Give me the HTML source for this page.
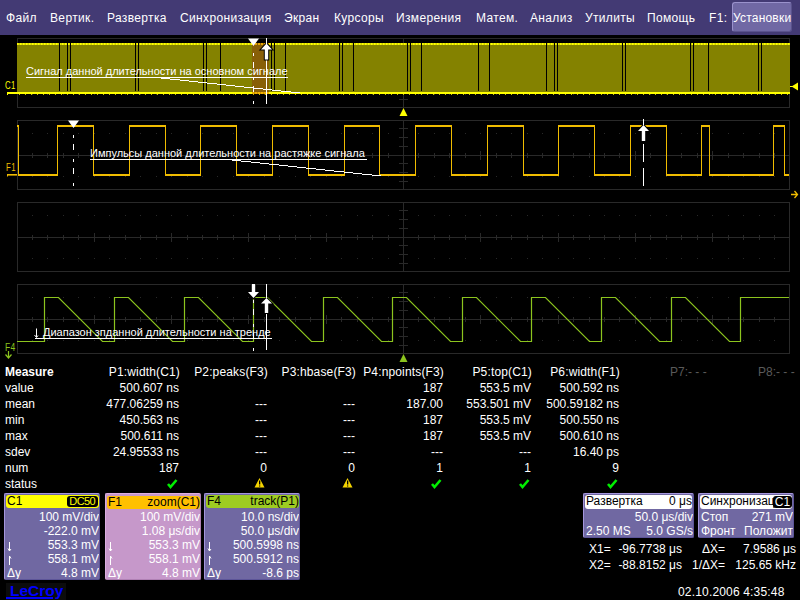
<!DOCTYPE html>
<html><head><meta charset="utf-8"><style>
*{margin:0;padding:0;box-sizing:border-box}
html,body{width:800px;height:600px;overflow:hidden;background:#000}
body{position:relative;font-family:"Liberation Sans",sans-serif;font-size:12px;line-height:14px;color:#fff}
.a{position:absolute;white-space:nowrap}
.r{text-align:right}
#menu{position:absolute;left:0;top:0;width:800px;height:35px;background:#433a74}
#menu .a{color:#fff;top:11px;letter-spacing:0.35px}
svg{position:absolute;left:0;top:0}
.ann{font-size:11px;line-height:12px;color:#fff}
.box{position:absolute;top:493px;width:96px;height:87px;border:1px solid;border-radius:2px;color:#fff;overflow:hidden}
.box .hd{position:absolute;left:1px;top:1px;right:0;height:13px;border-radius:3px;color:#000}
.l{position:absolute;left:1px;top:-1px}
.rt{position:absolute;right:0;top:-1px}
.rw{position:absolute;left:2px;right:1px;white-space:nowrap}
.box .rw.r,.box2 .rw.r{left:auto;right:0;text-align:right}
.badge{position:absolute;right:1px;top:1px;width:31px;height:11px;background:#000;border-radius:3px;color:#ff0;font-size:11px;line-height:11px;text-align:center;letter-spacing:-0.6px;text-indent:-0.6px}
.box2{position:absolute;top:493px;height:45px;border:1px solid;border-color:#a496dc #5c5498 #5c5498 #a496dc;border-radius:2px;background:#7068a2;color:#fff;overflow:hidden}
.hd2{position:absolute;left:1px;top:1px;right:1px;height:14px;border-radius:3px;background:#fff;color:#000;overflow:hidden}
.badge2{position:absolute;right:0;top:1px;width:19px;height:12px;background:#000;border-radius:3px;color:#fff;text-align:center;line-height:12px}
</style></head><body>
<div id="menu">
<div class="a" style="left:6px">Файл</div>
<div class="a" style="left:50px">Вертик.</div>
<div class="a" style="left:107px">Развертка</div>
<div class="a" style="left:180px">Синхронизация</div>
<div class="a" style="left:284px">Экран</div>
<div class="a" style="left:334px">Курсоры</div>
<div class="a" style="left:396px">Измерения</div>
<div class="a" style="left:476px">Матем.</div>
<div class="a" style="left:530px">Анализ</div>
<div class="a" style="left:585px">Утилиты</div>
<div class="a" style="left:647px">Помощь</div>
<div class="a" style="left:709px">F1:</div>
<div class="a" style="left:732px;top:2px;width:60px;height:30px;background:#7068a4;border:1px solid;border-color:#9a92cc #5a528c #5a528c #9a92cc;border-radius:3px"></div>
<div class="a" style="left:733px;letter-spacing:0.2px">Установки</div>
</div>
<svg width="800" height="600" viewBox="0 0 800 600">
<rect x="17.5" y="38.5" width="772" height="69" fill="none" stroke="#292929" stroke-width="1"/>
<line x1="17" y1="73.5" x2="789" y2="73.5" stroke="#292929" stroke-width="1" />
<line x1="403.5" y1="38" x2="403.5" y2="107" stroke="#292929" stroke-width="1" />
<line x1="32.5" y1="71" x2="32.5" y2="76" stroke="#292929" stroke-width="1" />
<rect x="32" y="51" width="1" height="1" fill="#292929" />
<rect x="32" y="94" width="1" height="1" fill="#292929" />
<line x1="47.5" y1="71" x2="47.5" y2="76" stroke="#292929" stroke-width="1" />
<rect x="47" y="51" width="1" height="1" fill="#292929" />
<rect x="47" y="94" width="1" height="1" fill="#292929" />
<line x1="63.5" y1="71" x2="63.5" y2="76" stroke="#292929" stroke-width="1" />
<rect x="63" y="51" width="1" height="1" fill="#292929" />
<rect x="63" y="94" width="1" height="1" fill="#292929" />
<line x1="78.5" y1="71" x2="78.5" y2="76" stroke="#292929" stroke-width="1" />
<rect x="78" y="51" width="1" height="1" fill="#292929" />
<rect x="78" y="94" width="1" height="1" fill="#292929" />
<line x1="94.5" y1="69" x2="94.5" y2="78" stroke="#292929" stroke-width="1" />
<rect x="94" y="51" width="1" height="1" fill="#292929" />
<rect x="94" y="94" width="1" height="1" fill="#292929" />
<line x1="109.5" y1="71" x2="109.5" y2="76" stroke="#292929" stroke-width="1" />
<rect x="109" y="51" width="1" height="1" fill="#292929" />
<rect x="109" y="94" width="1" height="1" fill="#292929" />
<line x1="125.5" y1="71" x2="125.5" y2="76" stroke="#292929" stroke-width="1" />
<rect x="125" y="51" width="1" height="1" fill="#292929" />
<rect x="125" y="94" width="1" height="1" fill="#292929" />
<line x1="140.5" y1="71" x2="140.5" y2="76" stroke="#292929" stroke-width="1" />
<rect x="140" y="51" width="1" height="1" fill="#292929" />
<rect x="140" y="94" width="1" height="1" fill="#292929" />
<line x1="156.5" y1="71" x2="156.5" y2="76" stroke="#292929" stroke-width="1" />
<rect x="156" y="51" width="1" height="1" fill="#292929" />
<rect x="156" y="94" width="1" height="1" fill="#292929" />
<line x1="171.5" y1="69" x2="171.5" y2="78" stroke="#292929" stroke-width="1" />
<rect x="171" y="51" width="1" height="1" fill="#292929" />
<rect x="171" y="94" width="1" height="1" fill="#292929" />
<line x1="187.5" y1="71" x2="187.5" y2="76" stroke="#292929" stroke-width="1" />
<rect x="187" y="51" width="1" height="1" fill="#292929" />
<rect x="187" y="94" width="1" height="1" fill="#292929" />
<line x1="202.5" y1="71" x2="202.5" y2="76" stroke="#292929" stroke-width="1" />
<rect x="202" y="51" width="1" height="1" fill="#292929" />
<rect x="202" y="94" width="1" height="1" fill="#292929" />
<line x1="217.5" y1="71" x2="217.5" y2="76" stroke="#292929" stroke-width="1" />
<rect x="217" y="51" width="1" height="1" fill="#292929" />
<rect x="217" y="94" width="1" height="1" fill="#292929" />
<line x1="233.5" y1="71" x2="233.5" y2="76" stroke="#292929" stroke-width="1" />
<rect x="233" y="51" width="1" height="1" fill="#292929" />
<rect x="233" y="94" width="1" height="1" fill="#292929" />
<line x1="248.5" y1="69" x2="248.5" y2="78" stroke="#292929" stroke-width="1" />
<rect x="248" y="51" width="1" height="1" fill="#292929" />
<rect x="248" y="94" width="1" height="1" fill="#292929" />
<line x1="264.5" y1="71" x2="264.5" y2="76" stroke="#292929" stroke-width="1" />
<rect x="264" y="51" width="1" height="1" fill="#292929" />
<rect x="264" y="94" width="1" height="1" fill="#292929" />
<line x1="279.5" y1="71" x2="279.5" y2="76" stroke="#292929" stroke-width="1" />
<rect x="279" y="51" width="1" height="1" fill="#292929" />
<rect x="279" y="94" width="1" height="1" fill="#292929" />
<line x1="295.5" y1="71" x2="295.5" y2="76" stroke="#292929" stroke-width="1" />
<rect x="295" y="51" width="1" height="1" fill="#292929" />
<rect x="295" y="94" width="1" height="1" fill="#292929" />
<line x1="310.5" y1="71" x2="310.5" y2="76" stroke="#292929" stroke-width="1" />
<rect x="310" y="51" width="1" height="1" fill="#292929" />
<rect x="310" y="94" width="1" height="1" fill="#292929" />
<line x1="326.5" y1="69" x2="326.5" y2="78" stroke="#292929" stroke-width="1" />
<rect x="326" y="51" width="1" height="1" fill="#292929" />
<rect x="326" y="94" width="1" height="1" fill="#292929" />
<line x1="341.5" y1="71" x2="341.5" y2="76" stroke="#292929" stroke-width="1" />
<rect x="341" y="51" width="1" height="1" fill="#292929" />
<rect x="341" y="94" width="1" height="1" fill="#292929" />
<line x1="357.5" y1="71" x2="357.5" y2="76" stroke="#292929" stroke-width="1" />
<rect x="357" y="51" width="1" height="1" fill="#292929" />
<rect x="357" y="94" width="1" height="1" fill="#292929" />
<line x1="372.5" y1="71" x2="372.5" y2="76" stroke="#292929" stroke-width="1" />
<rect x="372" y="51" width="1" height="1" fill="#292929" />
<rect x="372" y="94" width="1" height="1" fill="#292929" />
<line x1="388.5" y1="71" x2="388.5" y2="76" stroke="#292929" stroke-width="1" />
<rect x="388" y="51" width="1" height="1" fill="#292929" />
<rect x="388" y="94" width="1" height="1" fill="#292929" />
<line x1="403.5" y1="69" x2="403.5" y2="78" stroke="#292929" stroke-width="1" />
<rect x="403" y="51" width="1" height="1" fill="#292929" />
<rect x="403" y="94" width="1" height="1" fill="#292929" />
<line x1="418.5" y1="71" x2="418.5" y2="76" stroke="#292929" stroke-width="1" />
<rect x="418" y="51" width="1" height="1" fill="#292929" />
<rect x="418" y="94" width="1" height="1" fill="#292929" />
<line x1="434.5" y1="71" x2="434.5" y2="76" stroke="#292929" stroke-width="1" />
<rect x="434" y="51" width="1" height="1" fill="#292929" />
<rect x="434" y="94" width="1" height="1" fill="#292929" />
<line x1="449.5" y1="71" x2="449.5" y2="76" stroke="#292929" stroke-width="1" />
<rect x="449" y="51" width="1" height="1" fill="#292929" />
<rect x="449" y="94" width="1" height="1" fill="#292929" />
<line x1="465.5" y1="71" x2="465.5" y2="76" stroke="#292929" stroke-width="1" />
<rect x="465" y="51" width="1" height="1" fill="#292929" />
<rect x="465" y="94" width="1" height="1" fill="#292929" />
<line x1="480.5" y1="69" x2="480.5" y2="78" stroke="#292929" stroke-width="1" />
<rect x="480" y="51" width="1" height="1" fill="#292929" />
<rect x="480" y="94" width="1" height="1" fill="#292929" />
<line x1="496.5" y1="71" x2="496.5" y2="76" stroke="#292929" stroke-width="1" />
<rect x="496" y="51" width="1" height="1" fill="#292929" />
<rect x="496" y="94" width="1" height="1" fill="#292929" />
<line x1="511.5" y1="71" x2="511.5" y2="76" stroke="#292929" stroke-width="1" />
<rect x="511" y="51" width="1" height="1" fill="#292929" />
<rect x="511" y="94" width="1" height="1" fill="#292929" />
<line x1="527.5" y1="71" x2="527.5" y2="76" stroke="#292929" stroke-width="1" />
<rect x="527" y="51" width="1" height="1" fill="#292929" />
<rect x="527" y="94" width="1" height="1" fill="#292929" />
<line x1="542.5" y1="71" x2="542.5" y2="76" stroke="#292929" stroke-width="1" />
<rect x="542" y="51" width="1" height="1" fill="#292929" />
<rect x="542" y="94" width="1" height="1" fill="#292929" />
<line x1="558.5" y1="69" x2="558.5" y2="78" stroke="#292929" stroke-width="1" />
<rect x="558" y="51" width="1" height="1" fill="#292929" />
<rect x="558" y="94" width="1" height="1" fill="#292929" />
<line x1="573.5" y1="71" x2="573.5" y2="76" stroke="#292929" stroke-width="1" />
<rect x="573" y="51" width="1" height="1" fill="#292929" />
<rect x="573" y="94" width="1" height="1" fill="#292929" />
<line x1="589.5" y1="71" x2="589.5" y2="76" stroke="#292929" stroke-width="1" />
<rect x="589" y="51" width="1" height="1" fill="#292929" />
<rect x="589" y="94" width="1" height="1" fill="#292929" />
<line x1="604.5" y1="71" x2="604.5" y2="76" stroke="#292929" stroke-width="1" />
<rect x="604" y="51" width="1" height="1" fill="#292929" />
<rect x="604" y="94" width="1" height="1" fill="#292929" />
<line x1="619.5" y1="71" x2="619.5" y2="76" stroke="#292929" stroke-width="1" />
<rect x="619" y="51" width="1" height="1" fill="#292929" />
<rect x="619" y="94" width="1" height="1" fill="#292929" />
<line x1="635.5" y1="69" x2="635.5" y2="78" stroke="#292929" stroke-width="1" />
<rect x="635" y="51" width="1" height="1" fill="#292929" />
<rect x="635" y="94" width="1" height="1" fill="#292929" />
<line x1="650.5" y1="71" x2="650.5" y2="76" stroke="#292929" stroke-width="1" />
<rect x="650" y="51" width="1" height="1" fill="#292929" />
<rect x="650" y="94" width="1" height="1" fill="#292929" />
<line x1="666.5" y1="71" x2="666.5" y2="76" stroke="#292929" stroke-width="1" />
<rect x="666" y="51" width="1" height="1" fill="#292929" />
<rect x="666" y="94" width="1" height="1" fill="#292929" />
<line x1="681.5" y1="71" x2="681.5" y2="76" stroke="#292929" stroke-width="1" />
<rect x="681" y="51" width="1" height="1" fill="#292929" />
<rect x="681" y="94" width="1" height="1" fill="#292929" />
<line x1="697.5" y1="71" x2="697.5" y2="76" stroke="#292929" stroke-width="1" />
<rect x="697" y="51" width="1" height="1" fill="#292929" />
<rect x="697" y="94" width="1" height="1" fill="#292929" />
<line x1="712.5" y1="69" x2="712.5" y2="78" stroke="#292929" stroke-width="1" />
<rect x="712" y="51" width="1" height="1" fill="#292929" />
<rect x="712" y="94" width="1" height="1" fill="#292929" />
<line x1="728.5" y1="71" x2="728.5" y2="76" stroke="#292929" stroke-width="1" />
<rect x="728" y="51" width="1" height="1" fill="#292929" />
<rect x="728" y="94" width="1" height="1" fill="#292929" />
<line x1="743.5" y1="71" x2="743.5" y2="76" stroke="#292929" stroke-width="1" />
<rect x="743" y="51" width="1" height="1" fill="#292929" />
<rect x="743" y="94" width="1" height="1" fill="#292929" />
<line x1="759.5" y1="71" x2="759.5" y2="76" stroke="#292929" stroke-width="1" />
<rect x="759" y="51" width="1" height="1" fill="#292929" />
<rect x="759" y="94" width="1" height="1" fill="#292929" />
<line x1="774.5" y1="71" x2="774.5" y2="76" stroke="#292929" stroke-width="1" />
<rect x="774" y="51" width="1" height="1" fill="#292929" />
<rect x="774" y="94" width="1" height="1" fill="#292929" />
<line x1="399" y1="46.5" x2="408" y2="46.5" stroke="#292929" stroke-width="1" />
<line x1="399" y1="55.5" x2="408" y2="55.5" stroke="#292929" stroke-width="1" />
<line x1="399" y1="64.5" x2="408" y2="64.5" stroke="#292929" stroke-width="1" />
<line x1="399" y1="81.5" x2="408" y2="81.5" stroke="#292929" stroke-width="1" />
<line x1="399" y1="90.5" x2="408" y2="90.5" stroke="#292929" stroke-width="1" />
<line x1="399" y1="99.5" x2="408" y2="99.5" stroke="#292929" stroke-width="1" />
<rect x="17.5" y="120.5" width="772" height="69" fill="none" stroke="#292929" stroke-width="1"/>
<line x1="17" y1="155.5" x2="789" y2="155.5" stroke="#292929" stroke-width="1" />
<line x1="403.5" y1="120" x2="403.5" y2="189" stroke="#292929" stroke-width="1" />
<line x1="32.5" y1="153" x2="32.5" y2="158" stroke="#292929" stroke-width="1" />
<rect x="32" y="133" width="1" height="1" fill="#292929" />
<rect x="32" y="176" width="1" height="1" fill="#292929" />
<line x1="47.5" y1="153" x2="47.5" y2="158" stroke="#292929" stroke-width="1" />
<rect x="47" y="133" width="1" height="1" fill="#292929" />
<rect x="47" y="176" width="1" height="1" fill="#292929" />
<line x1="63.5" y1="153" x2="63.5" y2="158" stroke="#292929" stroke-width="1" />
<rect x="63" y="133" width="1" height="1" fill="#292929" />
<rect x="63" y="176" width="1" height="1" fill="#292929" />
<line x1="78.5" y1="153" x2="78.5" y2="158" stroke="#292929" stroke-width="1" />
<rect x="78" y="133" width="1" height="1" fill="#292929" />
<rect x="78" y="176" width="1" height="1" fill="#292929" />
<line x1="94.5" y1="151" x2="94.5" y2="160" stroke="#292929" stroke-width="1" />
<rect x="94" y="133" width="1" height="1" fill="#292929" />
<rect x="94" y="176" width="1" height="1" fill="#292929" />
<line x1="109.5" y1="153" x2="109.5" y2="158" stroke="#292929" stroke-width="1" />
<rect x="109" y="133" width="1" height="1" fill="#292929" />
<rect x="109" y="176" width="1" height="1" fill="#292929" />
<line x1="125.5" y1="153" x2="125.5" y2="158" stroke="#292929" stroke-width="1" />
<rect x="125" y="133" width="1" height="1" fill="#292929" />
<rect x="125" y="176" width="1" height="1" fill="#292929" />
<line x1="140.5" y1="153" x2="140.5" y2="158" stroke="#292929" stroke-width="1" />
<rect x="140" y="133" width="1" height="1" fill="#292929" />
<rect x="140" y="176" width="1" height="1" fill="#292929" />
<line x1="156.5" y1="153" x2="156.5" y2="158" stroke="#292929" stroke-width="1" />
<rect x="156" y="133" width="1" height="1" fill="#292929" />
<rect x="156" y="176" width="1" height="1" fill="#292929" />
<line x1="171.5" y1="151" x2="171.5" y2="160" stroke="#292929" stroke-width="1" />
<rect x="171" y="133" width="1" height="1" fill="#292929" />
<rect x="171" y="176" width="1" height="1" fill="#292929" />
<line x1="187.5" y1="153" x2="187.5" y2="158" stroke="#292929" stroke-width="1" />
<rect x="187" y="133" width="1" height="1" fill="#292929" />
<rect x="187" y="176" width="1" height="1" fill="#292929" />
<line x1="202.5" y1="153" x2="202.5" y2="158" stroke="#292929" stroke-width="1" />
<rect x="202" y="133" width="1" height="1" fill="#292929" />
<rect x="202" y="176" width="1" height="1" fill="#292929" />
<line x1="217.5" y1="153" x2="217.5" y2="158" stroke="#292929" stroke-width="1" />
<rect x="217" y="133" width="1" height="1" fill="#292929" />
<rect x="217" y="176" width="1" height="1" fill="#292929" />
<line x1="233.5" y1="153" x2="233.5" y2="158" stroke="#292929" stroke-width="1" />
<rect x="233" y="133" width="1" height="1" fill="#292929" />
<rect x="233" y="176" width="1" height="1" fill="#292929" />
<line x1="248.5" y1="151" x2="248.5" y2="160" stroke="#292929" stroke-width="1" />
<rect x="248" y="133" width="1" height="1" fill="#292929" />
<rect x="248" y="176" width="1" height="1" fill="#292929" />
<line x1="264.5" y1="153" x2="264.5" y2="158" stroke="#292929" stroke-width="1" />
<rect x="264" y="133" width="1" height="1" fill="#292929" />
<rect x="264" y="176" width="1" height="1" fill="#292929" />
<line x1="279.5" y1="153" x2="279.5" y2="158" stroke="#292929" stroke-width="1" />
<rect x="279" y="133" width="1" height="1" fill="#292929" />
<rect x="279" y="176" width="1" height="1" fill="#292929" />
<line x1="295.5" y1="153" x2="295.5" y2="158" stroke="#292929" stroke-width="1" />
<rect x="295" y="133" width="1" height="1" fill="#292929" />
<rect x="295" y="176" width="1" height="1" fill="#292929" />
<line x1="310.5" y1="153" x2="310.5" y2="158" stroke="#292929" stroke-width="1" />
<rect x="310" y="133" width="1" height="1" fill="#292929" />
<rect x="310" y="176" width="1" height="1" fill="#292929" />
<line x1="326.5" y1="151" x2="326.5" y2="160" stroke="#292929" stroke-width="1" />
<rect x="326" y="133" width="1" height="1" fill="#292929" />
<rect x="326" y="176" width="1" height="1" fill="#292929" />
<line x1="341.5" y1="153" x2="341.5" y2="158" stroke="#292929" stroke-width="1" />
<rect x="341" y="133" width="1" height="1" fill="#292929" />
<rect x="341" y="176" width="1" height="1" fill="#292929" />
<line x1="357.5" y1="153" x2="357.5" y2="158" stroke="#292929" stroke-width="1" />
<rect x="357" y="133" width="1" height="1" fill="#292929" />
<rect x="357" y="176" width="1" height="1" fill="#292929" />
<line x1="372.5" y1="153" x2="372.5" y2="158" stroke="#292929" stroke-width="1" />
<rect x="372" y="133" width="1" height="1" fill="#292929" />
<rect x="372" y="176" width="1" height="1" fill="#292929" />
<line x1="388.5" y1="153" x2="388.5" y2="158" stroke="#292929" stroke-width="1" />
<rect x="388" y="133" width="1" height="1" fill="#292929" />
<rect x="388" y="176" width="1" height="1" fill="#292929" />
<line x1="403.5" y1="151" x2="403.5" y2="160" stroke="#292929" stroke-width="1" />
<rect x="403" y="133" width="1" height="1" fill="#292929" />
<rect x="403" y="176" width="1" height="1" fill="#292929" />
<line x1="418.5" y1="153" x2="418.5" y2="158" stroke="#292929" stroke-width="1" />
<rect x="418" y="133" width="1" height="1" fill="#292929" />
<rect x="418" y="176" width="1" height="1" fill="#292929" />
<line x1="434.5" y1="153" x2="434.5" y2="158" stroke="#292929" stroke-width="1" />
<rect x="434" y="133" width="1" height="1" fill="#292929" />
<rect x="434" y="176" width="1" height="1" fill="#292929" />
<line x1="449.5" y1="153" x2="449.5" y2="158" stroke="#292929" stroke-width="1" />
<rect x="449" y="133" width="1" height="1" fill="#292929" />
<rect x="449" y="176" width="1" height="1" fill="#292929" />
<line x1="465.5" y1="153" x2="465.5" y2="158" stroke="#292929" stroke-width="1" />
<rect x="465" y="133" width="1" height="1" fill="#292929" />
<rect x="465" y="176" width="1" height="1" fill="#292929" />
<line x1="480.5" y1="151" x2="480.5" y2="160" stroke="#292929" stroke-width="1" />
<rect x="480" y="133" width="1" height="1" fill="#292929" />
<rect x="480" y="176" width="1" height="1" fill="#292929" />
<line x1="496.5" y1="153" x2="496.5" y2="158" stroke="#292929" stroke-width="1" />
<rect x="496" y="133" width="1" height="1" fill="#292929" />
<rect x="496" y="176" width="1" height="1" fill="#292929" />
<line x1="511.5" y1="153" x2="511.5" y2="158" stroke="#292929" stroke-width="1" />
<rect x="511" y="133" width="1" height="1" fill="#292929" />
<rect x="511" y="176" width="1" height="1" fill="#292929" />
<line x1="527.5" y1="153" x2="527.5" y2="158" stroke="#292929" stroke-width="1" />
<rect x="527" y="133" width="1" height="1" fill="#292929" />
<rect x="527" y="176" width="1" height="1" fill="#292929" />
<line x1="542.5" y1="153" x2="542.5" y2="158" stroke="#292929" stroke-width="1" />
<rect x="542" y="133" width="1" height="1" fill="#292929" />
<rect x="542" y="176" width="1" height="1" fill="#292929" />
<line x1="558.5" y1="151" x2="558.5" y2="160" stroke="#292929" stroke-width="1" />
<rect x="558" y="133" width="1" height="1" fill="#292929" />
<rect x="558" y="176" width="1" height="1" fill="#292929" />
<line x1="573.5" y1="153" x2="573.5" y2="158" stroke="#292929" stroke-width="1" />
<rect x="573" y="133" width="1" height="1" fill="#292929" />
<rect x="573" y="176" width="1" height="1" fill="#292929" />
<line x1="589.5" y1="153" x2="589.5" y2="158" stroke="#292929" stroke-width="1" />
<rect x="589" y="133" width="1" height="1" fill="#292929" />
<rect x="589" y="176" width="1" height="1" fill="#292929" />
<line x1="604.5" y1="153" x2="604.5" y2="158" stroke="#292929" stroke-width="1" />
<rect x="604" y="133" width="1" height="1" fill="#292929" />
<rect x="604" y="176" width="1" height="1" fill="#292929" />
<line x1="619.5" y1="153" x2="619.5" y2="158" stroke="#292929" stroke-width="1" />
<rect x="619" y="133" width="1" height="1" fill="#292929" />
<rect x="619" y="176" width="1" height="1" fill="#292929" />
<line x1="635.5" y1="151" x2="635.5" y2="160" stroke="#292929" stroke-width="1" />
<rect x="635" y="133" width="1" height="1" fill="#292929" />
<rect x="635" y="176" width="1" height="1" fill="#292929" />
<line x1="650.5" y1="153" x2="650.5" y2="158" stroke="#292929" stroke-width="1" />
<rect x="650" y="133" width="1" height="1" fill="#292929" />
<rect x="650" y="176" width="1" height="1" fill="#292929" />
<line x1="666.5" y1="153" x2="666.5" y2="158" stroke="#292929" stroke-width="1" />
<rect x="666" y="133" width="1" height="1" fill="#292929" />
<rect x="666" y="176" width="1" height="1" fill="#292929" />
<line x1="681.5" y1="153" x2="681.5" y2="158" stroke="#292929" stroke-width="1" />
<rect x="681" y="133" width="1" height="1" fill="#292929" />
<rect x="681" y="176" width="1" height="1" fill="#292929" />
<line x1="697.5" y1="153" x2="697.5" y2="158" stroke="#292929" stroke-width="1" />
<rect x="697" y="133" width="1" height="1" fill="#292929" />
<rect x="697" y="176" width="1" height="1" fill="#292929" />
<line x1="712.5" y1="151" x2="712.5" y2="160" stroke="#292929" stroke-width="1" />
<rect x="712" y="133" width="1" height="1" fill="#292929" />
<rect x="712" y="176" width="1" height="1" fill="#292929" />
<line x1="728.5" y1="153" x2="728.5" y2="158" stroke="#292929" stroke-width="1" />
<rect x="728" y="133" width="1" height="1" fill="#292929" />
<rect x="728" y="176" width="1" height="1" fill="#292929" />
<line x1="743.5" y1="153" x2="743.5" y2="158" stroke="#292929" stroke-width="1" />
<rect x="743" y="133" width="1" height="1" fill="#292929" />
<rect x="743" y="176" width="1" height="1" fill="#292929" />
<line x1="759.5" y1="153" x2="759.5" y2="158" stroke="#292929" stroke-width="1" />
<rect x="759" y="133" width="1" height="1" fill="#292929" />
<rect x="759" y="176" width="1" height="1" fill="#292929" />
<line x1="774.5" y1="153" x2="774.5" y2="158" stroke="#292929" stroke-width="1" />
<rect x="774" y="133" width="1" height="1" fill="#292929" />
<rect x="774" y="176" width="1" height="1" fill="#292929" />
<line x1="399" y1="128.5" x2="408" y2="128.5" stroke="#292929" stroke-width="1" />
<line x1="399" y1="137.5" x2="408" y2="137.5" stroke="#292929" stroke-width="1" />
<line x1="399" y1="146.5" x2="408" y2="146.5" stroke="#292929" stroke-width="1" />
<line x1="399" y1="163.5" x2="408" y2="163.5" stroke="#292929" stroke-width="1" />
<line x1="399" y1="172.5" x2="408" y2="172.5" stroke="#292929" stroke-width="1" />
<line x1="399" y1="181.5" x2="408" y2="181.5" stroke="#292929" stroke-width="1" />
<rect x="17.5" y="202.5" width="772" height="69" fill="none" stroke="#292929" stroke-width="1"/>
<line x1="17" y1="237.5" x2="789" y2="237.5" stroke="#292929" stroke-width="1" />
<line x1="403.5" y1="202" x2="403.5" y2="271" stroke="#292929" stroke-width="1" />
<line x1="32.5" y1="235" x2="32.5" y2="240" stroke="#292929" stroke-width="1" />
<rect x="32" y="215" width="1" height="1" fill="#292929" />
<rect x="32" y="258" width="1" height="1" fill="#292929" />
<line x1="47.5" y1="235" x2="47.5" y2="240" stroke="#292929" stroke-width="1" />
<rect x="47" y="215" width="1" height="1" fill="#292929" />
<rect x="47" y="258" width="1" height="1" fill="#292929" />
<line x1="63.5" y1="235" x2="63.5" y2="240" stroke="#292929" stroke-width="1" />
<rect x="63" y="215" width="1" height="1" fill="#292929" />
<rect x="63" y="258" width="1" height="1" fill="#292929" />
<line x1="78.5" y1="235" x2="78.5" y2="240" stroke="#292929" stroke-width="1" />
<rect x="78" y="215" width="1" height="1" fill="#292929" />
<rect x="78" y="258" width="1" height="1" fill="#292929" />
<line x1="94.5" y1="233" x2="94.5" y2="242" stroke="#292929" stroke-width="1" />
<rect x="94" y="215" width="1" height="1" fill="#292929" />
<rect x="94" y="258" width="1" height="1" fill="#292929" />
<line x1="109.5" y1="235" x2="109.5" y2="240" stroke="#292929" stroke-width="1" />
<rect x="109" y="215" width="1" height="1" fill="#292929" />
<rect x="109" y="258" width="1" height="1" fill="#292929" />
<line x1="125.5" y1="235" x2="125.5" y2="240" stroke="#292929" stroke-width="1" />
<rect x="125" y="215" width="1" height="1" fill="#292929" />
<rect x="125" y="258" width="1" height="1" fill="#292929" />
<line x1="140.5" y1="235" x2="140.5" y2="240" stroke="#292929" stroke-width="1" />
<rect x="140" y="215" width="1" height="1" fill="#292929" />
<rect x="140" y="258" width="1" height="1" fill="#292929" />
<line x1="156.5" y1="235" x2="156.5" y2="240" stroke="#292929" stroke-width="1" />
<rect x="156" y="215" width="1" height="1" fill="#292929" />
<rect x="156" y="258" width="1" height="1" fill="#292929" />
<line x1="171.5" y1="233" x2="171.5" y2="242" stroke="#292929" stroke-width="1" />
<rect x="171" y="215" width="1" height="1" fill="#292929" />
<rect x="171" y="258" width="1" height="1" fill="#292929" />
<line x1="187.5" y1="235" x2="187.5" y2="240" stroke="#292929" stroke-width="1" />
<rect x="187" y="215" width="1" height="1" fill="#292929" />
<rect x="187" y="258" width="1" height="1" fill="#292929" />
<line x1="202.5" y1="235" x2="202.5" y2="240" stroke="#292929" stroke-width="1" />
<rect x="202" y="215" width="1" height="1" fill="#292929" />
<rect x="202" y="258" width="1" height="1" fill="#292929" />
<line x1="217.5" y1="235" x2="217.5" y2="240" stroke="#292929" stroke-width="1" />
<rect x="217" y="215" width="1" height="1" fill="#292929" />
<rect x="217" y="258" width="1" height="1" fill="#292929" />
<line x1="233.5" y1="235" x2="233.5" y2="240" stroke="#292929" stroke-width="1" />
<rect x="233" y="215" width="1" height="1" fill="#292929" />
<rect x="233" y="258" width="1" height="1" fill="#292929" />
<line x1="248.5" y1="233" x2="248.5" y2="242" stroke="#292929" stroke-width="1" />
<rect x="248" y="215" width="1" height="1" fill="#292929" />
<rect x="248" y="258" width="1" height="1" fill="#292929" />
<line x1="264.5" y1="235" x2="264.5" y2="240" stroke="#292929" stroke-width="1" />
<rect x="264" y="215" width="1" height="1" fill="#292929" />
<rect x="264" y="258" width="1" height="1" fill="#292929" />
<line x1="279.5" y1="235" x2="279.5" y2="240" stroke="#292929" stroke-width="1" />
<rect x="279" y="215" width="1" height="1" fill="#292929" />
<rect x="279" y="258" width="1" height="1" fill="#292929" />
<line x1="295.5" y1="235" x2="295.5" y2="240" stroke="#292929" stroke-width="1" />
<rect x="295" y="215" width="1" height="1" fill="#292929" />
<rect x="295" y="258" width="1" height="1" fill="#292929" />
<line x1="310.5" y1="235" x2="310.5" y2="240" stroke="#292929" stroke-width="1" />
<rect x="310" y="215" width="1" height="1" fill="#292929" />
<rect x="310" y="258" width="1" height="1" fill="#292929" />
<line x1="326.5" y1="233" x2="326.5" y2="242" stroke="#292929" stroke-width="1" />
<rect x="326" y="215" width="1" height="1" fill="#292929" />
<rect x="326" y="258" width="1" height="1" fill="#292929" />
<line x1="341.5" y1="235" x2="341.5" y2="240" stroke="#292929" stroke-width="1" />
<rect x="341" y="215" width="1" height="1" fill="#292929" />
<rect x="341" y="258" width="1" height="1" fill="#292929" />
<line x1="357.5" y1="235" x2="357.5" y2="240" stroke="#292929" stroke-width="1" />
<rect x="357" y="215" width="1" height="1" fill="#292929" />
<rect x="357" y="258" width="1" height="1" fill="#292929" />
<line x1="372.5" y1="235" x2="372.5" y2="240" stroke="#292929" stroke-width="1" />
<rect x="372" y="215" width="1" height="1" fill="#292929" />
<rect x="372" y="258" width="1" height="1" fill="#292929" />
<line x1="388.5" y1="235" x2="388.5" y2="240" stroke="#292929" stroke-width="1" />
<rect x="388" y="215" width="1" height="1" fill="#292929" />
<rect x="388" y="258" width="1" height="1" fill="#292929" />
<line x1="403.5" y1="233" x2="403.5" y2="242" stroke="#292929" stroke-width="1" />
<rect x="403" y="215" width="1" height="1" fill="#292929" />
<rect x="403" y="258" width="1" height="1" fill="#292929" />
<line x1="418.5" y1="235" x2="418.5" y2="240" stroke="#292929" stroke-width="1" />
<rect x="418" y="215" width="1" height="1" fill="#292929" />
<rect x="418" y="258" width="1" height="1" fill="#292929" />
<line x1="434.5" y1="235" x2="434.5" y2="240" stroke="#292929" stroke-width="1" />
<rect x="434" y="215" width="1" height="1" fill="#292929" />
<rect x="434" y="258" width="1" height="1" fill="#292929" />
<line x1="449.5" y1="235" x2="449.5" y2="240" stroke="#292929" stroke-width="1" />
<rect x="449" y="215" width="1" height="1" fill="#292929" />
<rect x="449" y="258" width="1" height="1" fill="#292929" />
<line x1="465.5" y1="235" x2="465.5" y2="240" stroke="#292929" stroke-width="1" />
<rect x="465" y="215" width="1" height="1" fill="#292929" />
<rect x="465" y="258" width="1" height="1" fill="#292929" />
<line x1="480.5" y1="233" x2="480.5" y2="242" stroke="#292929" stroke-width="1" />
<rect x="480" y="215" width="1" height="1" fill="#292929" />
<rect x="480" y="258" width="1" height="1" fill="#292929" />
<line x1="496.5" y1="235" x2="496.5" y2="240" stroke="#292929" stroke-width="1" />
<rect x="496" y="215" width="1" height="1" fill="#292929" />
<rect x="496" y="258" width="1" height="1" fill="#292929" />
<line x1="511.5" y1="235" x2="511.5" y2="240" stroke="#292929" stroke-width="1" />
<rect x="511" y="215" width="1" height="1" fill="#292929" />
<rect x="511" y="258" width="1" height="1" fill="#292929" />
<line x1="527.5" y1="235" x2="527.5" y2="240" stroke="#292929" stroke-width="1" />
<rect x="527" y="215" width="1" height="1" fill="#292929" />
<rect x="527" y="258" width="1" height="1" fill="#292929" />
<line x1="542.5" y1="235" x2="542.5" y2="240" stroke="#292929" stroke-width="1" />
<rect x="542" y="215" width="1" height="1" fill="#292929" />
<rect x="542" y="258" width="1" height="1" fill="#292929" />
<line x1="558.5" y1="233" x2="558.5" y2="242" stroke="#292929" stroke-width="1" />
<rect x="558" y="215" width="1" height="1" fill="#292929" />
<rect x="558" y="258" width="1" height="1" fill="#292929" />
<line x1="573.5" y1="235" x2="573.5" y2="240" stroke="#292929" stroke-width="1" />
<rect x="573" y="215" width="1" height="1" fill="#292929" />
<rect x="573" y="258" width="1" height="1" fill="#292929" />
<line x1="589.5" y1="235" x2="589.5" y2="240" stroke="#292929" stroke-width="1" />
<rect x="589" y="215" width="1" height="1" fill="#292929" />
<rect x="589" y="258" width="1" height="1" fill="#292929" />
<line x1="604.5" y1="235" x2="604.5" y2="240" stroke="#292929" stroke-width="1" />
<rect x="604" y="215" width="1" height="1" fill="#292929" />
<rect x="604" y="258" width="1" height="1" fill="#292929" />
<line x1="619.5" y1="235" x2="619.5" y2="240" stroke="#292929" stroke-width="1" />
<rect x="619" y="215" width="1" height="1" fill="#292929" />
<rect x="619" y="258" width="1" height="1" fill="#292929" />
<line x1="635.5" y1="233" x2="635.5" y2="242" stroke="#292929" stroke-width="1" />
<rect x="635" y="215" width="1" height="1" fill="#292929" />
<rect x="635" y="258" width="1" height="1" fill="#292929" />
<line x1="650.5" y1="235" x2="650.5" y2="240" stroke="#292929" stroke-width="1" />
<rect x="650" y="215" width="1" height="1" fill="#292929" />
<rect x="650" y="258" width="1" height="1" fill="#292929" />
<line x1="666.5" y1="235" x2="666.5" y2="240" stroke="#292929" stroke-width="1" />
<rect x="666" y="215" width="1" height="1" fill="#292929" />
<rect x="666" y="258" width="1" height="1" fill="#292929" />
<line x1="681.5" y1="235" x2="681.5" y2="240" stroke="#292929" stroke-width="1" />
<rect x="681" y="215" width="1" height="1" fill="#292929" />
<rect x="681" y="258" width="1" height="1" fill="#292929" />
<line x1="697.5" y1="235" x2="697.5" y2="240" stroke="#292929" stroke-width="1" />
<rect x="697" y="215" width="1" height="1" fill="#292929" />
<rect x="697" y="258" width="1" height="1" fill="#292929" />
<line x1="712.5" y1="233" x2="712.5" y2="242" stroke="#292929" stroke-width="1" />
<rect x="712" y="215" width="1" height="1" fill="#292929" />
<rect x="712" y="258" width="1" height="1" fill="#292929" />
<line x1="728.5" y1="235" x2="728.5" y2="240" stroke="#292929" stroke-width="1" />
<rect x="728" y="215" width="1" height="1" fill="#292929" />
<rect x="728" y="258" width="1" height="1" fill="#292929" />
<line x1="743.5" y1="235" x2="743.5" y2="240" stroke="#292929" stroke-width="1" />
<rect x="743" y="215" width="1" height="1" fill="#292929" />
<rect x="743" y="258" width="1" height="1" fill="#292929" />
<line x1="759.5" y1="235" x2="759.5" y2="240" stroke="#292929" stroke-width="1" />
<rect x="759" y="215" width="1" height="1" fill="#292929" />
<rect x="759" y="258" width="1" height="1" fill="#292929" />
<line x1="774.5" y1="235" x2="774.5" y2="240" stroke="#292929" stroke-width="1" />
<rect x="774" y="215" width="1" height="1" fill="#292929" />
<rect x="774" y="258" width="1" height="1" fill="#292929" />
<line x1="399" y1="210.5" x2="408" y2="210.5" stroke="#292929" stroke-width="1" />
<line x1="399" y1="219.5" x2="408" y2="219.5" stroke="#292929" stroke-width="1" />
<line x1="399" y1="228.5" x2="408" y2="228.5" stroke="#292929" stroke-width="1" />
<line x1="399" y1="245.5" x2="408" y2="245.5" stroke="#292929" stroke-width="1" />
<line x1="399" y1="254.5" x2="408" y2="254.5" stroke="#292929" stroke-width="1" />
<line x1="399" y1="263.5" x2="408" y2="263.5" stroke="#292929" stroke-width="1" />
<rect x="17.5" y="284.5" width="772" height="69" fill="none" stroke="#292929" stroke-width="1"/>
<line x1="17" y1="319.5" x2="789" y2="319.5" stroke="#292929" stroke-width="1" />
<line x1="403.5" y1="284" x2="403.5" y2="353" stroke="#292929" stroke-width="1" />
<line x1="32.5" y1="317" x2="32.5" y2="322" stroke="#292929" stroke-width="1" />
<rect x="32" y="297" width="1" height="1" fill="#292929" />
<rect x="32" y="340" width="1" height="1" fill="#292929" />
<line x1="47.5" y1="317" x2="47.5" y2="322" stroke="#292929" stroke-width="1" />
<rect x="47" y="297" width="1" height="1" fill="#292929" />
<rect x="47" y="340" width="1" height="1" fill="#292929" />
<line x1="63.5" y1="317" x2="63.5" y2="322" stroke="#292929" stroke-width="1" />
<rect x="63" y="297" width="1" height="1" fill="#292929" />
<rect x="63" y="340" width="1" height="1" fill="#292929" />
<line x1="78.5" y1="317" x2="78.5" y2="322" stroke="#292929" stroke-width="1" />
<rect x="78" y="297" width="1" height="1" fill="#292929" />
<rect x="78" y="340" width="1" height="1" fill="#292929" />
<line x1="94.5" y1="315" x2="94.5" y2="324" stroke="#292929" stroke-width="1" />
<rect x="94" y="297" width="1" height="1" fill="#292929" />
<rect x="94" y="340" width="1" height="1" fill="#292929" />
<line x1="109.5" y1="317" x2="109.5" y2="322" stroke="#292929" stroke-width="1" />
<rect x="109" y="297" width="1" height="1" fill="#292929" />
<rect x="109" y="340" width="1" height="1" fill="#292929" />
<line x1="125.5" y1="317" x2="125.5" y2="322" stroke="#292929" stroke-width="1" />
<rect x="125" y="297" width="1" height="1" fill="#292929" />
<rect x="125" y="340" width="1" height="1" fill="#292929" />
<line x1="140.5" y1="317" x2="140.5" y2="322" stroke="#292929" stroke-width="1" />
<rect x="140" y="297" width="1" height="1" fill="#292929" />
<rect x="140" y="340" width="1" height="1" fill="#292929" />
<line x1="156.5" y1="317" x2="156.5" y2="322" stroke="#292929" stroke-width="1" />
<rect x="156" y="297" width="1" height="1" fill="#292929" />
<rect x="156" y="340" width="1" height="1" fill="#292929" />
<line x1="171.5" y1="315" x2="171.5" y2="324" stroke="#292929" stroke-width="1" />
<rect x="171" y="297" width="1" height="1" fill="#292929" />
<rect x="171" y="340" width="1" height="1" fill="#292929" />
<line x1="187.5" y1="317" x2="187.5" y2="322" stroke="#292929" stroke-width="1" />
<rect x="187" y="297" width="1" height="1" fill="#292929" />
<rect x="187" y="340" width="1" height="1" fill="#292929" />
<line x1="202.5" y1="317" x2="202.5" y2="322" stroke="#292929" stroke-width="1" />
<rect x="202" y="297" width="1" height="1" fill="#292929" />
<rect x="202" y="340" width="1" height="1" fill="#292929" />
<line x1="217.5" y1="317" x2="217.5" y2="322" stroke="#292929" stroke-width="1" />
<rect x="217" y="297" width="1" height="1" fill="#292929" />
<rect x="217" y="340" width="1" height="1" fill="#292929" />
<line x1="233.5" y1="317" x2="233.5" y2="322" stroke="#292929" stroke-width="1" />
<rect x="233" y="297" width="1" height="1" fill="#292929" />
<rect x="233" y="340" width="1" height="1" fill="#292929" />
<line x1="248.5" y1="315" x2="248.5" y2="324" stroke="#292929" stroke-width="1" />
<rect x="248" y="297" width="1" height="1" fill="#292929" />
<rect x="248" y="340" width="1" height="1" fill="#292929" />
<line x1="264.5" y1="317" x2="264.5" y2="322" stroke="#292929" stroke-width="1" />
<rect x="264" y="297" width="1" height="1" fill="#292929" />
<rect x="264" y="340" width="1" height="1" fill="#292929" />
<line x1="279.5" y1="317" x2="279.5" y2="322" stroke="#292929" stroke-width="1" />
<rect x="279" y="297" width="1" height="1" fill="#292929" />
<rect x="279" y="340" width="1" height="1" fill="#292929" />
<line x1="295.5" y1="317" x2="295.5" y2="322" stroke="#292929" stroke-width="1" />
<rect x="295" y="297" width="1" height="1" fill="#292929" />
<rect x="295" y="340" width="1" height="1" fill="#292929" />
<line x1="310.5" y1="317" x2="310.5" y2="322" stroke="#292929" stroke-width="1" />
<rect x="310" y="297" width="1" height="1" fill="#292929" />
<rect x="310" y="340" width="1" height="1" fill="#292929" />
<line x1="326.5" y1="315" x2="326.5" y2="324" stroke="#292929" stroke-width="1" />
<rect x="326" y="297" width="1" height="1" fill="#292929" />
<rect x="326" y="340" width="1" height="1" fill="#292929" />
<line x1="341.5" y1="317" x2="341.5" y2="322" stroke="#292929" stroke-width="1" />
<rect x="341" y="297" width="1" height="1" fill="#292929" />
<rect x="341" y="340" width="1" height="1" fill="#292929" />
<line x1="357.5" y1="317" x2="357.5" y2="322" stroke="#292929" stroke-width="1" />
<rect x="357" y="297" width="1" height="1" fill="#292929" />
<rect x="357" y="340" width="1" height="1" fill="#292929" />
<line x1="372.5" y1="317" x2="372.5" y2="322" stroke="#292929" stroke-width="1" />
<rect x="372" y="297" width="1" height="1" fill="#292929" />
<rect x="372" y="340" width="1" height="1" fill="#292929" />
<line x1="388.5" y1="317" x2="388.5" y2="322" stroke="#292929" stroke-width="1" />
<rect x="388" y="297" width="1" height="1" fill="#292929" />
<rect x="388" y="340" width="1" height="1" fill="#292929" />
<line x1="403.5" y1="315" x2="403.5" y2="324" stroke="#292929" stroke-width="1" />
<rect x="403" y="297" width="1" height="1" fill="#292929" />
<rect x="403" y="340" width="1" height="1" fill="#292929" />
<line x1="418.5" y1="317" x2="418.5" y2="322" stroke="#292929" stroke-width="1" />
<rect x="418" y="297" width="1" height="1" fill="#292929" />
<rect x="418" y="340" width="1" height="1" fill="#292929" />
<line x1="434.5" y1="317" x2="434.5" y2="322" stroke="#292929" stroke-width="1" />
<rect x="434" y="297" width="1" height="1" fill="#292929" />
<rect x="434" y="340" width="1" height="1" fill="#292929" />
<line x1="449.5" y1="317" x2="449.5" y2="322" stroke="#292929" stroke-width="1" />
<rect x="449" y="297" width="1" height="1" fill="#292929" />
<rect x="449" y="340" width="1" height="1" fill="#292929" />
<line x1="465.5" y1="317" x2="465.5" y2="322" stroke="#292929" stroke-width="1" />
<rect x="465" y="297" width="1" height="1" fill="#292929" />
<rect x="465" y="340" width="1" height="1" fill="#292929" />
<line x1="480.5" y1="315" x2="480.5" y2="324" stroke="#292929" stroke-width="1" />
<rect x="480" y="297" width="1" height="1" fill="#292929" />
<rect x="480" y="340" width="1" height="1" fill="#292929" />
<line x1="496.5" y1="317" x2="496.5" y2="322" stroke="#292929" stroke-width="1" />
<rect x="496" y="297" width="1" height="1" fill="#292929" />
<rect x="496" y="340" width="1" height="1" fill="#292929" />
<line x1="511.5" y1="317" x2="511.5" y2="322" stroke="#292929" stroke-width="1" />
<rect x="511" y="297" width="1" height="1" fill="#292929" />
<rect x="511" y="340" width="1" height="1" fill="#292929" />
<line x1="527.5" y1="317" x2="527.5" y2="322" stroke="#292929" stroke-width="1" />
<rect x="527" y="297" width="1" height="1" fill="#292929" />
<rect x="527" y="340" width="1" height="1" fill="#292929" />
<line x1="542.5" y1="317" x2="542.5" y2="322" stroke="#292929" stroke-width="1" />
<rect x="542" y="297" width="1" height="1" fill="#292929" />
<rect x="542" y="340" width="1" height="1" fill="#292929" />
<line x1="558.5" y1="315" x2="558.5" y2="324" stroke="#292929" stroke-width="1" />
<rect x="558" y="297" width="1" height="1" fill="#292929" />
<rect x="558" y="340" width="1" height="1" fill="#292929" />
<line x1="573.5" y1="317" x2="573.5" y2="322" stroke="#292929" stroke-width="1" />
<rect x="573" y="297" width="1" height="1" fill="#292929" />
<rect x="573" y="340" width="1" height="1" fill="#292929" />
<line x1="589.5" y1="317" x2="589.5" y2="322" stroke="#292929" stroke-width="1" />
<rect x="589" y="297" width="1" height="1" fill="#292929" />
<rect x="589" y="340" width="1" height="1" fill="#292929" />
<line x1="604.5" y1="317" x2="604.5" y2="322" stroke="#292929" stroke-width="1" />
<rect x="604" y="297" width="1" height="1" fill="#292929" />
<rect x="604" y="340" width="1" height="1" fill="#292929" />
<line x1="619.5" y1="317" x2="619.5" y2="322" stroke="#292929" stroke-width="1" />
<rect x="619" y="297" width="1" height="1" fill="#292929" />
<rect x="619" y="340" width="1" height="1" fill="#292929" />
<line x1="635.5" y1="315" x2="635.5" y2="324" stroke="#292929" stroke-width="1" />
<rect x="635" y="297" width="1" height="1" fill="#292929" />
<rect x="635" y="340" width="1" height="1" fill="#292929" />
<line x1="650.5" y1="317" x2="650.5" y2="322" stroke="#292929" stroke-width="1" />
<rect x="650" y="297" width="1" height="1" fill="#292929" />
<rect x="650" y="340" width="1" height="1" fill="#292929" />
<line x1="666.5" y1="317" x2="666.5" y2="322" stroke="#292929" stroke-width="1" />
<rect x="666" y="297" width="1" height="1" fill="#292929" />
<rect x="666" y="340" width="1" height="1" fill="#292929" />
<line x1="681.5" y1="317" x2="681.5" y2="322" stroke="#292929" stroke-width="1" />
<rect x="681" y="297" width="1" height="1" fill="#292929" />
<rect x="681" y="340" width="1" height="1" fill="#292929" />
<line x1="697.5" y1="317" x2="697.5" y2="322" stroke="#292929" stroke-width="1" />
<rect x="697" y="297" width="1" height="1" fill="#292929" />
<rect x="697" y="340" width="1" height="1" fill="#292929" />
<line x1="712.5" y1="315" x2="712.5" y2="324" stroke="#292929" stroke-width="1" />
<rect x="712" y="297" width="1" height="1" fill="#292929" />
<rect x="712" y="340" width="1" height="1" fill="#292929" />
<line x1="728.5" y1="317" x2="728.5" y2="322" stroke="#292929" stroke-width="1" />
<rect x="728" y="297" width="1" height="1" fill="#292929" />
<rect x="728" y="340" width="1" height="1" fill="#292929" />
<line x1="743.5" y1="317" x2="743.5" y2="322" stroke="#292929" stroke-width="1" />
<rect x="743" y="297" width="1" height="1" fill="#292929" />
<rect x="743" y="340" width="1" height="1" fill="#292929" />
<line x1="759.5" y1="317" x2="759.5" y2="322" stroke="#292929" stroke-width="1" />
<rect x="759" y="297" width="1" height="1" fill="#292929" />
<rect x="759" y="340" width="1" height="1" fill="#292929" />
<line x1="774.5" y1="317" x2="774.5" y2="322" stroke="#292929" stroke-width="1" />
<rect x="774" y="297" width="1" height="1" fill="#292929" />
<rect x="774" y="340" width="1" height="1" fill="#292929" />
<line x1="399" y1="292.5" x2="408" y2="292.5" stroke="#292929" stroke-width="1" />
<line x1="399" y1="301.5" x2="408" y2="301.5" stroke="#292929" stroke-width="1" />
<line x1="399" y1="310.5" x2="408" y2="310.5" stroke="#292929" stroke-width="1" />
<line x1="399" y1="327.5" x2="408" y2="327.5" stroke="#292929" stroke-width="1" />
<line x1="399" y1="336.5" x2="408" y2="336.5" stroke="#292929" stroke-width="1" />
<line x1="399" y1="345.5" x2="408" y2="345.5" stroke="#292929" stroke-width="1" />
<rect x="17" y="43" width="773" height="50" fill="#848200" />
<rect x="252" y="43" width="17" height="50" fill="#885f08" />
<rect x="17" y="43" width="773" height="2" fill="#d0d000" />
<line x1="17" y1="44" x2="790" y2="44" stroke="#ffff00" stroke-width="2" stroke-dasharray="1.5 1.5"/>
<rect x="17" y="92" width="773" height="2" fill="#ffff00" />
<line x1="19" y1="94.5" x2="789" y2="94.5" stroke="#c8c800" stroke-width="1" stroke-dasharray="1 5"/>
<rect x="252" y="43" width="17" height="2" fill="#8c5f0c" />
<line x1="252" y1="44" x2="269" y2="44" stroke="#e8a800" stroke-width="2" stroke-dasharray="2 1"/>
<rect x="252" y="92" width="17" height="2" fill="#c89000" />
<line x1="252" y1="93" x2="269" y2="93" stroke="#f0b000" stroke-width="2" stroke-dasharray="2 1"/>
<rect x="59" y="43" width="1" height="48" fill="#000" />
<rect x="67" y="43" width="1" height="48" fill="#000" />
<rect x="70" y="43" width="1" height="48" fill="#000" />
<rect x="135" y="43" width="1" height="48" fill="#000" />
<rect x="138" y="43" width="1" height="48" fill="#000" />
<rect x="203" y="43" width="1" height="48" fill="#000" />
<rect x="206" y="43" width="1" height="48" fill="#000" />
<rect x="220" y="43" width="1" height="48" fill="#000" />
<rect x="271" y="43" width="1" height="48" fill="#000" />
<rect x="274" y="43" width="1" height="48" fill="#000" />
<rect x="285" y="43" width="1" height="48" fill="#000" />
<rect x="339" y="43" width="1" height="48" fill="#000" />
<rect x="342" y="43" width="1" height="48" fill="#000" />
<rect x="353" y="43" width="1" height="48" fill="#000" />
<rect x="407" y="43" width="1" height="48" fill="#000" />
<rect x="410" y="43" width="1" height="48" fill="#000" />
<rect x="421" y="43" width="1" height="48" fill="#000" />
<rect x="478" y="43" width="1" height="48" fill="#000" />
<rect x="489" y="43" width="1" height="48" fill="#000" />
<rect x="546" y="43" width="1" height="48" fill="#000" />
<rect x="554" y="43" width="1" height="48" fill="#000" />
<rect x="557" y="43" width="1" height="48" fill="#000" />
<rect x="622" y="43" width="1" height="48" fill="#000" />
<rect x="625" y="43" width="1" height="48" fill="#000" />
<rect x="690" y="43" width="1" height="48" fill="#000" />
<rect x="693" y="43" width="1" height="48" fill="#000" />
<rect x="708" y="43" width="1" height="48" fill="#000" />
<rect x="758" y="43" width="1" height="48" fill="#000" />
<rect x="761" y="43" width="1" height="48" fill="#000" />
<rect x="17" y="125" width="2" height="2" fill="#f0bc00" />
<rect x="18" y="125" width="1" height="51" fill="#f0bc00" />
<rect x="18" y="174" width="40" height="2" fill="#f0bc00" />
<rect x="57" y="125" width="1" height="51" fill="#f0bc00" />
<rect x="57" y="125" width="37" height="2" fill="#f0bc00" />
<rect x="93" y="125" width="1" height="51" fill="#f0bc00" />
<rect x="93" y="174" width="37" height="2" fill="#f0bc00" />
<rect x="129" y="125" width="1" height="51" fill="#f0bc00" />
<rect x="129" y="125" width="37" height="2" fill="#f0bc00" />
<rect x="165" y="125" width="1" height="51" fill="#f0bc00" />
<rect x="165" y="174" width="36" height="2" fill="#f0bc00" />
<rect x="200" y="125" width="1" height="51" fill="#f0bc00" />
<rect x="200" y="125" width="37" height="2" fill="#f0bc00" />
<rect x="236" y="125" width="1" height="51" fill="#f0bc00" />
<rect x="236" y="174" width="37" height="2" fill="#f0bc00" />
<rect x="272" y="125" width="1" height="51" fill="#f0bc00" />
<rect x="272" y="125" width="37" height="2" fill="#f0bc00" />
<rect x="308" y="125" width="1" height="51" fill="#f0bc00" />
<rect x="308" y="174" width="37" height="2" fill="#f0bc00" />
<rect x="344" y="125" width="1" height="51" fill="#f0bc00" />
<rect x="344" y="125" width="36" height="2" fill="#f0bc00" />
<rect x="379" y="125" width="1" height="51" fill="#f0bc00" />
<rect x="379" y="174" width="37" height="2" fill="#f0bc00" />
<rect x="415" y="125" width="1" height="51" fill="#f0bc00" />
<rect x="415" y="125" width="37" height="2" fill="#f0bc00" />
<rect x="451" y="125" width="1" height="51" fill="#f0bc00" />
<rect x="451" y="174" width="37" height="2" fill="#f0bc00" />
<rect x="487" y="125" width="1" height="51" fill="#f0bc00" />
<rect x="487" y="125" width="37" height="2" fill="#f0bc00" />
<rect x="523" y="125" width="1" height="51" fill="#f0bc00" />
<rect x="523" y="174" width="36" height="2" fill="#f0bc00" />
<rect x="558" y="125" width="1" height="51" fill="#f0bc00" />
<rect x="558" y="125" width="37" height="2" fill="#f0bc00" />
<rect x="594" y="125" width="1" height="51" fill="#f0bc00" />
<rect x="594" y="174" width="37" height="2" fill="#f0bc00" />
<rect x="630" y="125" width="1" height="51" fill="#f0bc00" />
<rect x="630" y="125" width="37" height="2" fill="#f0bc00" />
<rect x="666" y="125" width="1" height="51" fill="#f0bc00" />
<rect x="666" y="174" width="36" height="2" fill="#f0bc00" />
<rect x="701" y="125" width="1" height="51" fill="#f0bc00" />
<rect x="701" y="125" width="9" height="2" fill="#f0bc00" />
<rect x="709" y="125" width="1" height="51" fill="#f0bc00" />
<rect x="709" y="174" width="65" height="2" fill="#f0bc00" />
<rect x="773" y="125" width="1" height="51" fill="#f0bc00" />
<rect x="773" y="125" width="12" height="2" fill="#f0bc00" />
<rect x="784" y="125" width="1" height="51" fill="#f0bc00" />
<rect x="784" y="174" width="5" height="2" fill="#f0bc00" />
<polyline fill="none" stroke="#8cc41e" stroke-width="1.2" points="17,341.5 44.5,341.5 44.5,297.5 58.5,297.5 102.5,341.5 114.5,341.5 114.5,297.5 128.5,297.5 172.5,341.5 184.5,341.5 184.5,297.5 198.5,297.5 242.5,341.5 253.5,341.5 253.5,297.5 267.5,297.5 311.5,341.5 323.5,341.5 323.5,297.5 337.5,297.5 381.5,341.5 392.5,341.5 392.5,297.5 406.5,297.5 450.5,341.5 462.5,341.5 462.5,297.5 476.5,297.5 520.5,341.5 531.5,341.5 531.5,297.5 545.5,297.5 589.5,341.5 601.5,341.5 601.5,297.5 615.5,297.5 659.5,341.5 671.5,341.5 671.5,297.5 685.5,297.5 729.5,341.5 740.5,341.5 740.5,297.5 754.5,297.5 789,297.5"/>
<polyline points="168,484 170.5,487 176.5,480" fill="none" stroke="#00ee00" stroke-width="2.6" stroke-linejoin="miter"/>
<polyline points="432,484 434.5,487 440.5,480" fill="none" stroke="#00ee00" stroke-width="2.6" stroke-linejoin="miter"/>
<polyline points="520,484 522.5,487 528.5,480" fill="none" stroke="#00ee00" stroke-width="2.6" stroke-linejoin="miter"/>
<polyline points="608,484 610.5,487 616.5,480" fill="none" stroke="#00ee00" stroke-width="2.6" stroke-linejoin="miter"/>
<path d="M259.5,478 L264.5,487.5 L254.5,487.5 Z" fill="#f5d400"/>
<rect x="259" y="480.5" width="1.3" height="4" fill="#000"/><rect x="259" y="485.5" width="1.3" height="1" fill="#000"/>
<path d="M347.5,478 L352.5,487.5 L342.5,487.5 Z" fill="#f5d400"/>
<rect x="347" y="480.5" width="1.3" height="4" fill="#000"/><rect x="347" y="485.5" width="1.3" height="1" fill="#000"/>
</svg>
<!-- labels -->
<div class="a" style="left:5px;top:80px;font-size:10px;line-height:12px;color:#ffff00;letter-spacing:0.5px;transform:scaleX(0.78);transform-origin:0 0">C1</div>
<div class="a" style="left:6px;top:162px;font-size:10px;line-height:12px;color:#f0bc00;letter-spacing:0.5px;transform:scaleX(0.78);transform-origin:0 0">F1</div>
<div class="a" style="left:5px;top:342px;font-size:10px;line-height:12px;color:#8cc41e;letter-spacing:0.5px;transform:scaleX(0.85);transform-origin:0 0">F4</div>
<!-- annotations -->
<div class="a ann" style="left:26px;top:65px">Сигнал данной длительности на основном сигнале</div>
<div class="a ann" style="left:90px;top:147px">Импульсы данной длительности на растяжке сигнала</div>
<div class="a ann" style="left:43px;top:326px">Диапазон зпданной длительности на тренде</div>
<!-- measure table -->
<div class="a" style="left:5px;top:365px;font-weight:bold">Measure</div>
<div class="a" style="left:5px;top:381px">value</div>
<div class="a" style="left:5px;top:397px">mean</div>
<div class="a" style="left:5px;top:413px">min</div>
<div class="a" style="left:5px;top:429px">max</div>
<div class="a" style="left:5px;top:445px">sdev</div>
<div class="a" style="left:5px;top:461px">num</div>
<div class="a" style="left:5px;top:477px">status</div>
<div class="a r" style="right:620px;top:365px;letter-spacing:0.15px">P1:width(C1)</div>
<div class="a r" style="right:621px;top:381px">500.607 ns</div>
<div class="a r" style="right:621px;top:397px">477.06259 ns</div>
<div class="a r" style="right:621px;top:413px">450.563 ns</div>
<div class="a r" style="right:621px;top:429px">500.611 ns</div>
<div class="a r" style="right:621px;top:445px">24.95533 ns</div>
<div class="a r" style="right:621px;top:461px">187</div>
<div class="a r" style="right:532px;top:365px;letter-spacing:0.15px">P2:peaks(F3)</div>
<div class="a r" style="right:533px;top:397px">---</div>
<div class="a r" style="right:533px;top:413px">---</div>
<div class="a r" style="right:533px;top:429px">---</div>
<div class="a r" style="right:533px;top:445px">---</div>
<div class="a r" style="right:533px;top:461px">0</div>
<div class="a r" style="right:444px;top:365px;letter-spacing:0.15px">P3:hbase(F3)</div>
<div class="a r" style="right:445px;top:397px">---</div>
<div class="a r" style="right:445px;top:413px">---</div>
<div class="a r" style="right:445px;top:429px">---</div>
<div class="a r" style="right:445px;top:445px">---</div>
<div class="a r" style="right:445px;top:461px">0</div>
<div class="a r" style="right:356px;top:365px;letter-spacing:0.15px">P4:npoints(F3)</div>
<div class="a r" style="right:357px;top:381px">187</div>
<div class="a r" style="right:357px;top:397px">187.00</div>
<div class="a r" style="right:357px;top:413px">187</div>
<div class="a r" style="right:357px;top:429px">187</div>
<div class="a r" style="right:357px;top:445px">---</div>
<div class="a r" style="right:357px;top:461px">1</div>
<div class="a r" style="right:268px;top:365px;letter-spacing:0.15px">P5:top(C1)</div>
<div class="a r" style="right:269px;top:381px">553.5 mV</div>
<div class="a r" style="right:269px;top:397px">553.501 mV</div>
<div class="a r" style="right:269px;top:413px">553.5 mV</div>
<div class="a r" style="right:269px;top:429px">553.5 mV</div>
<div class="a r" style="right:269px;top:445px">---</div>
<div class="a r" style="right:269px;top:461px">1</div>
<div class="a r" style="right:180px;top:365px;letter-spacing:0.15px">P6:width(F1)</div>
<div class="a r" style="right:181px;top:381px">500.592 ns</div>
<div class="a r" style="right:181px;top:397px">500.59182 ns</div>
<div class="a r" style="right:181px;top:413px">500.550 ns</div>
<div class="a r" style="right:181px;top:429px">500.610 ns</div>
<div class="a r" style="right:181px;top:445px">16.40 ps</div>
<div class="a r" style="right:181px;top:461px">9</div>
<div class="a" style="left:670px;top:365px;color:#5a5a5a">P7:- - -</div>
<div class="a" style="left:758px;top:365px;color:#5a5a5a">P8:- - -</div>
<!-- channel boxes -->
<div class="box" style="left:4px;background:#7068a2;border-color:#a496dc #5c5498 #5c5498 #a496dc">
 <div class="hd" style="background:#ffff00"><span class="l">C1</span><span class="badge">DC50</span></div>
 <div class="rw r" style="top:16px">100 mV/div</div>
 <div class="rw r" style="top:30px">-222.0 mV</div>
 <div class="rw r" style="top:44px">553.3 mV</div>
 <div class="rw r" style="top:58px">558.1 mV</div>
 <div class="rw r" style="top:72px">4.8 mV</div><div class="rw" style="top:72px">Δy</div>
</div>
<div class="box" style="left:105px;background:#c698ca;border-color:#dcaee0 #b080b4 #b080b4 #dcaee0">
 <div class="hd" style="background:#ffc000;top:2px;border-top-left-radius:2px"><span class="l">F1</span><span class="rt">zoom(C1)</span></div>
 <div class="rw r" style="top:16px">100 mV/div</div>
 <div class="rw r" style="top:30px">1.08 μs/div</div>
 <div class="rw r" style="top:44px">553.3 mV</div>
 <div class="rw r" style="top:58px">558.1 mV</div>
 <div class="rw r" style="top:72px">4.8 mV</div><div class="rw" style="top:72px">Δy</div>
</div>
<div class="box" style="left:204px;background:#7068a2;border-color:#a496dc #5c5498 #5c5498 #a496dc">
 <div class="hd" style="background:#9ecc22"><span class="l">F4</span><span class="rt">track(P1)</span></div>
 <div class="rw r" style="top:16px">10.0 ns/div</div>
 <div class="rw r" style="top:30px">50.0 μs/div</div>
 <div class="rw r" style="top:44px">500.5998 ns</div>
 <div class="rw r" style="top:58px">500.5912 ns</div>
 <div class="rw r" style="top:72px">-8.6 ps</div><div class="rw" style="top:72px">Δy</div>
</div>
<!-- timebase -->
<div class="box2" style="left:583px;width:111px">
 <div class="hd2"><span class="l">Развертка</span><span class="rt">0 μs</span></div>
 <div class="rw r" style="top:16px">50.0 μs/div</div>
 <div class="rw" style="top:30px">2.50 MS</div><div class="rw r" style="top:30px">5.0 GS/s</div>
</div>
<div class="box2" style="left:698px;width:96px">
 <div class="hd2"><span class="l">Синхронизация</span><span class="badge2">C1</span></div>
 <div class="rw" style="top:16px">Стоп</div><div class="rw r" style="top:16px">271 mV</div>
 <div class="rw" style="top:30px">Фронт</div><div class="rw r" style="top:30px">Положит</div>
</div>
<div class="a" style="left:589px;top:542px">X1=</div>
<div class="a r" style="right:118px;top:542px">-96.7738 μs</div>
<div class="a" style="left:702px;top:542px">ΔX=</div>
<div class="a r" style="right:4px;top:542px">7.9586 μs</div>
<div class="a" style="left:589px;top:558px">X2=</div>
<div class="a r" style="right:118px;top:558px">-88.8152 μs</div>
<div class="a" style="left:692px;top:558px">1/ΔX=</div>
<div class="a r" style="right:4px;top:558px">125.65 kHz</div>
<div class="a" style="left:678px;top:585px;letter-spacing:0.17px">02.10.2006 4:35:48</div>
<div class="a" style="left:6px;top:583px;width:60px;height:17px;background:#0c0c0c"></div>
<div class="a" style="left:10px;top:582px;font:bold 15.5px/17px 'Liberation Sans';color:#0000ff">LeCroy</div>
<div class="a" style="left:6px;top:597px;width:47px;height:2px;background:#0000ff"></div>

<svg width="800" height="600" viewBox="0 0 800 600" style="pointer-events:none">
<path d="M248.0,38.5 L259.0,38.5 L253.5,46 Z" fill="#ffffff"/>
<rect x="253" y="53" width="1" height="3" fill="#ffffff"/>
<rect x="253" y="62" width="1" height="6" fill="#ffffff"/>
<rect x="253" y="77" width="1" height="3" fill="#ffffff"/>
<rect x="253" y="86" width="1" height="6" fill="#ffffff"/>
<rect x="253" y="101" width="1" height="3" fill="#ffffff"/>
<rect x="266" y="38" width="1" height="66" fill="#ffffff"/>
<path d="M266.5,43.5 L272.0,49.5 L268.2,49.5 L268.2,59.5 L264.8,59.5 L264.8,49.5 L261.0,49.5 Z" fill="none" stroke="#000" stroke-width="2"/><path d="M266.5,43.5 L272.0,49.5 L268.2,49.5 L268.2,59.5 L264.8,59.5 L264.8,49.5 L261.0,49.5 Z" fill="#ffffff"/>
<rect x="266" y="38" width="1" height="6" fill="#ffffff"/>
<rect x="26" y="77" width="262" height="1" fill="#ffffff"/>
<rect x="161" y="78" width="9" height="1" fill="#ffffff"/>
<rect x="170" y="79" width="10" height="1" fill="#ffffff"/>
<rect x="180" y="80" width="9" height="1" fill="#ffffff"/>
<rect x="189" y="81" width="9" height="1" fill="#ffffff"/>
<rect x="198" y="82" width="9" height="1" fill="#ffffff"/>
<rect x="207" y="83" width="10" height="1" fill="#ffffff"/>
<rect x="217" y="84" width="9" height="1" fill="#ffffff"/>
<rect x="226" y="85" width="9" height="1" fill="#ffffff"/>
<rect x="235" y="86" width="9" height="1" fill="#ffffff"/>
<rect x="244" y="87" width="10" height="1" fill="#ffffff"/>
<rect x="254" y="88" width="9" height="1" fill="#ffffff"/>
<rect x="263" y="89" width="9" height="1" fill="#ffffff"/>
<rect x="272" y="90" width="9" height="1" fill="#ffffff"/>
<rect x="281" y="91" width="10" height="1" fill="#ffffff"/>
<rect x="291" y="92" width="9" height="1" fill="#ffffff"/>
<path d="M68.0,120.5 L79.0,120.5 L73.5,128 Z" fill="#ffffff"/>
<rect x="73" y="135" width="1" height="3" fill="#ffffff"/>
<rect x="73" y="144" width="1" height="6" fill="#ffffff"/>
<rect x="73" y="159" width="1" height="3" fill="#ffffff"/>
<rect x="73" y="168" width="1" height="6" fill="#ffffff"/>
<rect x="73" y="183" width="1" height="3" fill="#ffffff"/>
<path d="M643.5,125 L649.0,131 L645.2,131 L645.2,141 L641.8,141 L641.8,131 L638.0,131 Z" fill="none" stroke="#000" stroke-width="2"/><path d="M643.5,125 L649.0,131 L645.2,131 L645.2,141 L641.8,141 L641.8,131 L638.0,131 Z" fill="#ffffff"/>
<rect x="643" y="119" width="1" height="6" fill="#ffffff"/>
<rect x="643" y="144" width="1" height="18" fill="#ffffff"/>
<rect x="643" y="168" width="1" height="18" fill="#ffffff"/>
<rect x="90" y="159" width="277" height="1" fill="#ffffff"/>
<rect x="232" y="160" width="9" height="1" fill="#ffffff"/>
<rect x="241" y="161" width="10" height="1" fill="#ffffff"/>
<rect x="251" y="162" width="9" height="1" fill="#ffffff"/>
<rect x="260" y="163" width="9" height="1" fill="#ffffff"/>
<rect x="269" y="164" width="10" height="1" fill="#ffffff"/>
<rect x="279" y="165" width="9" height="1" fill="#ffffff"/>
<rect x="288" y="166" width="9" height="1" fill="#ffffff"/>
<rect x="297" y="167" width="9" height="1" fill="#ffffff"/>
<rect x="306" y="168" width="10" height="1" fill="#ffffff"/>
<rect x="316" y="169" width="9" height="1" fill="#ffffff"/>
<rect x="325" y="170" width="9" height="1" fill="#ffffff"/>
<rect x="334" y="171" width="10" height="1" fill="#ffffff"/>
<rect x="344" y="172" width="9" height="1" fill="#ffffff"/>
<rect x="353" y="173" width="9" height="1" fill="#ffffff"/>
<rect x="362" y="174" width="10" height="1" fill="#ffffff"/>
<rect x="372" y="175" width="9" height="1" fill="#ffffff"/>
<path d="M251.8,284 L255.2,284 L255.2,292 L259.0,292 L253.5,298 L248.0,292 L251.8,292 Z" fill="none" stroke="#000" stroke-width="2"/><path d="M251.8,284 L255.2,284 L255.2,292 L259.0,292 L253.5,298 L248.0,292 L251.8,292 Z" fill="#ffffff"/>
<rect x="253" y="300" width="1" height="3" fill="#ffffff"/>
<rect x="253" y="309" width="1" height="6" fill="#ffffff"/>
<rect x="253" y="324" width="1" height="3" fill="#ffffff"/>
<rect x="253" y="333" width="1" height="6" fill="#ffffff"/>
<rect x="253" y="348" width="1" height="3" fill="#ffffff"/>
<rect x="266" y="284" width="1" height="66" fill="#ffffff"/>
<path d="M266.5,298 L272.0,303.5 L268.2,303.5 L268.2,313 L264.8,313 L264.8,303.5 L261.0,303.5 Z" fill="none" stroke="#000" stroke-width="2"/><path d="M266.5,298 L272.0,303.5 L268.2,303.5 L268.2,313 L264.8,313 L264.8,303.5 L261.0,303.5 Z" fill="#ffffff"/>
<rect x="266" y="284" width="1" height="14" fill="#ffffff"/>
<rect x="35" y="338" width="237" height="1" fill="#ffffff"/>
<rect x="790" y="86" width="3" height="1" fill="#ffff00"/>
<path d="M791.5,86.5 L798,82.5 L798,90.5 Z" fill="#ffff00"/>
<path d="M791,194.5 H797 M794.5,191 L797.5,194.5 L794.5,198" fill="none" stroke="#f0bc00" stroke-width="1.3"/>
<path d="M403.5,108 L407.5,116 L399.5,116 Z" fill="#ffff00"/>
<path d="M403.5,354 L407.5,362 L399.5,362 Z" fill="#8cc41e"/>
<rect x="7" y="92" width="10" height="2" fill="#ffff00"/><rect x="7" y="94" width="1" height="1" fill="#ffff00"/>
<rect x="7" y="174" width="10" height="1.6" fill="#f0bc00"/><rect x="7" y="175" width="1" height="1.5" fill="#f0bc00"/>
<path d="M8.5,351 V358 M5.5,354.5 L8.5,358 L11.5,354.5" fill="none" stroke="#8cc41e" stroke-width="1.2"/>
<path d="M9.5,542 V551 M8.0,548.5 L9.5,551 M9.5,551 L11.0,549" fill="none" stroke="#fff" stroke-width="1"/>
<path d="M9.5,556 V565 M9.5,556 L11.0,558.5" fill="none" stroke="#fff" stroke-width="1"/>
<path d="M110.5,542 V551 M109.0,548.5 L110.5,551 M110.5,551 L112.0,549" fill="none" stroke="#fff" stroke-width="1"/>
<path d="M110.5,556 V565 M110.5,556 L112.0,558.5" fill="none" stroke="#fff" stroke-width="1"/>
<path d="M209.5,542 V551 M208.0,548.5 L209.5,551 M209.5,551 L211.0,549" fill="none" stroke="#fff" stroke-width="1"/>
<path d="M209.5,556 V565 M209.5,556 L211.0,558.5" fill="none" stroke="#fff" stroke-width="1"/>
<path d="M36.5,328.5 V337 M34.5,335 L36.5,337.5 L38,335.5" fill="none" stroke="#fff" stroke-width="1"/>
</svg>
</body></html>
